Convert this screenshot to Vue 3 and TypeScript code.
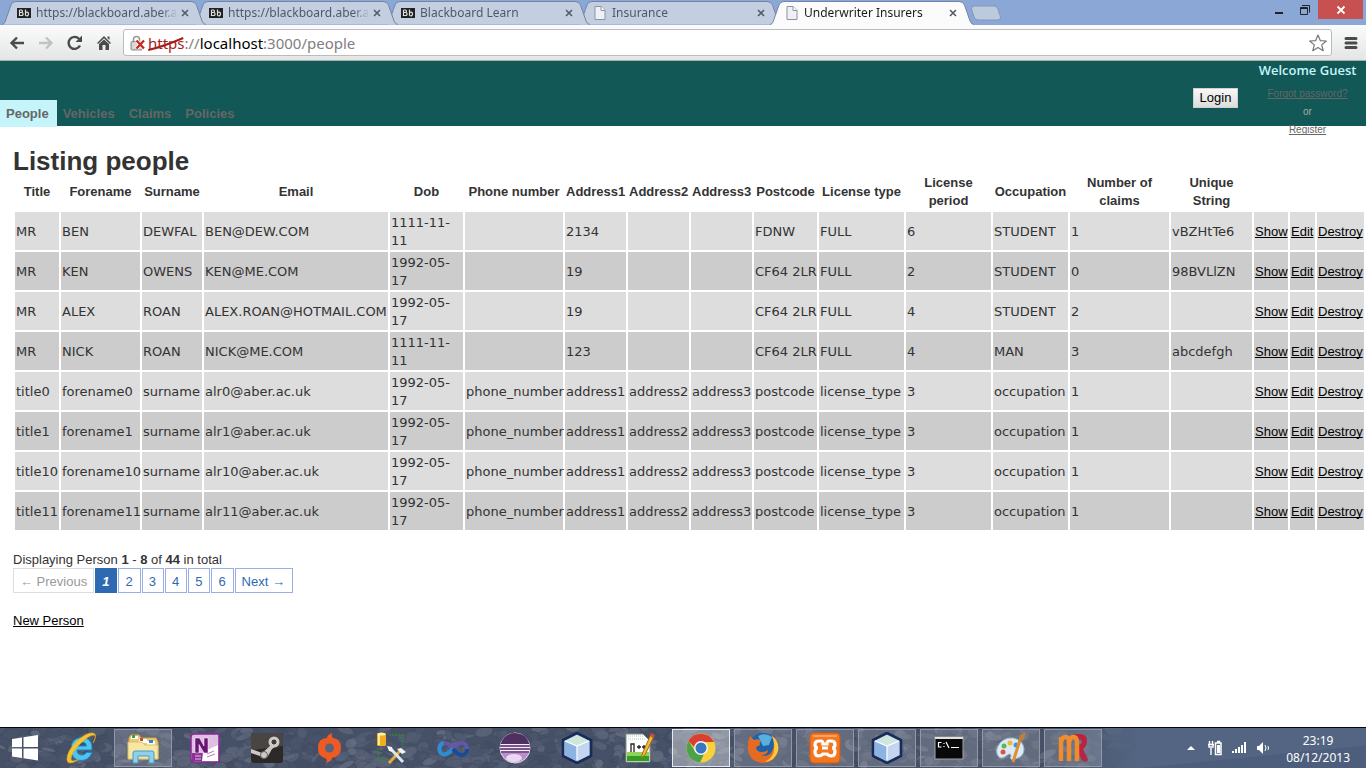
<script setup lang="ts">
import { ref } from 'vue'

interface Tab { id: number; title: string; icon: 'bb' | 'page'; active: boolean }
const tabs: Tab[] = [
  { id: 1, title: 'https://blackboard.aber.ac', icon: 'bb', active: false },
  { id: 2, title: 'https://blackboard.aber.ac', icon: 'bb', active: false },
  { id: 3, title: 'Blackboard Learn', icon: 'bb', active: false },
  { id: 4, title: 'Insurance', icon: 'page', active: false },
  { id: 5, title: 'Underwriter Insurers', icon: 'page', active: true },
]

const nav = ['People', 'Vehicles', 'Claims', 'Policies']
const current = ref('People')

const headings = [
  'Title', 'Forename', 'Surname', 'Email', 'Dob', 'Phone number', 'Address1', 'Address2', 'Address3',
  'Postcode', 'License type', 'License period', 'Occupation', 'Number of claims', 'Unique String', '', '', '',
]
const widths = [44, 79, 60, 184, 73, 98, 61, 61, 61, 63, 85, 85, 75, 99, 81, 34, 25, 47]

const named: string[][] = [
  ['MR', 'BEN', 'DEWFAL', 'BEN@DEW.COM', '1111-11-11', '', '2134', '', '', 'FDNW', 'FULL', '6', 'STUDENT', '1', 'vBZHtTe6'],
  ['MR', 'KEN', 'OWENS', 'KEN@ME.COM', '1992-05-17', '', '19', '', '', 'CF64 2LR', 'FULL', '2', 'STUDENT', '0', '98BVLlZN'],
  ['MR', 'ALEX', 'ROAN', 'ALEX.ROAN@HOTMAIL.COM', '1992-05-17', '', '19', '', '', 'CF64 2LR', 'FULL', '4', 'STUDENT', '2', ''],
  ['MR', 'NICK', 'ROAN', 'NICK@ME.COM', '1111-11-11', '', '123', '', '', 'CF64 2LR', 'FULL', '4', 'MAN', '3', 'abcdefgh'],
]
const seeded: string[][] = [0, 1, 10, 11].map((n) => [
  `title${n}`, `forename${n}`, 'surname', `alr${n}@aber.ac.uk`, '1992-05-17', 'phone_number',
  'address1', 'address2', 'address3', 'postcode', 'license_type', '3', 'occupation', '1', '',
])
const people = [...named, ...seeded]
const pages = [2, 3, 4, 5, 6]

interface App { id: string; label: string; icon: string; state: '' | 'open' | 'focus' }
const apps: App[] = [
  { id: 'ie', label: 'Internet Explorer', icon: 'ie', state: '' },
  { id: 'files', label: 'File Explorer', icon: 'files', state: 'open' },
  { id: 'onenote', label: 'OneNote', icon: 'onenote', state: '' },
  { id: 'steam', label: 'Steam', icon: 'steam', state: '' },
  { id: 'origin', label: 'Origin', icon: 'origin', state: '' },
  { id: 'db', label: 'Database tools', icon: 'db', state: '' },
  { id: 'vs', label: 'Visual Studio', icon: 'vs', state: '' },
  { id: 'eclipse', label: 'Eclipse', icon: 'eclipse', state: '' },
  { id: 'nb', label: 'NetBeans', icon: 'cube', state: '' },
  { id: 'npp', label: 'Notepad++', icon: 'npp', state: '' },
  { id: 'chrome', label: 'Chrome', icon: 'chrome', state: 'focus' },
  { id: 'firefox', label: 'Firefox', icon: 'firefox', state: 'open' },
  { id: 'xampp', label: 'XAMPP', icon: 'xampp', state: 'open' },
  { id: 'nb2', label: 'NetBeans window', icon: 'cube', state: 'open' },
  { id: 'cmd', label: 'Command Prompt', icon: 'cmd', state: 'open' },
  { id: 'paint', label: 'Paint', icon: 'paint', state: 'open' },
  { id: 'rubymine', label: 'RubyMine', icon: 'ruby', state: 'open' },
]

// Pebbles of the wallpaper that shows through the taskbar
interface Stone { x: number; y: number; rx: number; ry: number; r: number; fill: string }
let seed = 11
const rand = (): number => {
  seed = (seed * 16807) % 2147483647
  return seed / 2147483647
}
const shades = ['#4b556b', '#535e75', '#5c657a', '#646c80', '#48526a', '#535c70', '#596176', '#434d63']
const stones: Stone[] = Array.from({ length: 700 }, () => ({
  x: Math.round(rand() * 1130),
  y: Math.round(rand() * 42),
  rx: 4 + Math.round(rand() * 6),
  ry: 2 + Math.round(rand() * 4),
  r: Math.round(rand() * 60 - 30),
  fill: shades[Math.floor(rand() * shades.length)],
}))
</script>

<template>
  <div class="desktop">
    <header class="frame">
      <div class="tabs">
        <div v-for="t in tabs" :key="t.id" class="tab" :class="{ active: t.active }">
          <svg class="shape" viewBox="0 0 204 29" aria-hidden="true">
            <path v-if="t.active" d="M0 25.5Q2 25 3 22L9 5Q10 1.500 14 1.500H189Q193 1.500 194.500 5L200 21Q201.500 24.500 204 24.500V29H0Z" fill="#fbfbfb" />
            <path v-else d="M0 24.500Q2 24 3 22L9 5Q10 1.500 14 1.500H189Q193 1.500 194.500 5L200 21Q201.500 24.500 204 24.500Z" fill="#c3cfe0" />
            <path d="M0 24.500Q2 24 3 22L9 5Q10 1.500 14 1.500H189Q193 1.500 194.500 5L200 21Q201.500 24.500 204 24.500" fill="none" stroke="#7484a8" />
          </svg>
          <svg v-if="t.icon === 'bb'" class="fav" viewBox="0 0 14 14" aria-hidden="true">
            <rect y="2" width="14" height="10" fill="#222" />
            <path d="M2.500 4V10M2.500 4H4.500Q6 4.500 5 6.500H3M5 6.500Q7 7.500 5.500 9.500H2.500M8.500 3.500V9.500M8.500 6.500Q11.500 5.500 11.500 8Q11.500 10.500 8.500 9.500" fill="none" stroke="#e0e0e0" stroke-width="1.200" />
          </svg>
          <svg v-else class="fav" viewBox="0 0 14 14" aria-hidden="true">
            <path d="M2 .500H8L12 4.500V13.500H2Z" fill="#eef2f8" stroke="#8e939b" />
            <path d="M8 .500V4.500H12" fill="#fff" stroke="#8e939b" />
          </svg>
          <span class="title">{{ t.title }}</span>
          <button class="shut" type="button" aria-label="Close tab">
            <svg viewBox="0 0 8 8"><path d="M1 1L7 7M7 1L1 7" stroke="#535a66" stroke-width="1.600" /></svg>
          </button>
        </div>
        <button class="plus" type="button" aria-label="New tab">
          <svg viewBox="0 0 32 16"><path d="M4 1H24Q27 1 28 4L30.500 12Q31 15 28 15H8Q5 15 4 12L1.500 4Q1 1 4 1Z" fill="#bccadd" stroke="#8596ba" /></svg>
        </button>
      </div>
      <div class="controls">
        <button type="button" aria-label="Minimise"><svg viewBox="0 0 12 12"><path d="M2 9H10" stroke="#222" stroke-width="2" /></svg></button>
        <button type="button" aria-label="Restore"><svg viewBox="0 0 12 12" fill="none" stroke="#222"><path d="M3 1.500H10.500V8.500" /><path d="M1.500 3.500H8.500V10.500H1.500ZM1.500 4.500H8.500" /></svg></button>
        <button type="button" class="close" aria-label="Close"><svg viewBox="0 0 12 12"><path d="M2.500 2.500L9.500 9.500M9.500 2.500L2.500 9.500" stroke="#fff" stroke-width="1.800" /></svg></button>
      </div>
    </header>

    <div class="toolbar">
      <button class="tool" type="button" aria-label="Back"><svg viewBox="0 0 16 16"><path d="M15 8H3M8 2.500L2.500 8L8 13.500" fill="none" stroke="#4b4b4b" stroke-width="2.400" /></svg></button>
      <button class="tool" type="button" aria-label="Forward"><svg viewBox="0 0 16 16"><path d="M1 8H13M8 2.500L13.500 8L8 13.500" fill="none" stroke="#c2c2c2" stroke-width="2.400" /></svg></button>
      <button class="tool" type="button" aria-label="Reload"><svg viewBox="0 0 16 16"><path d="M13 10.500A6 6 0 1 1 12 3.800" fill="none" stroke="#4b4b4b" stroke-width="2.400" /><path d="M15 .500V7H8.500Z" fill="#4b4b4b" /></svg></button>
      <button class="tool" type="button" aria-label="Home"><svg viewBox="0 0 16 16"><path d="M8 1L15 8L14 9L8 3.300L2 9L1 8ZM11.500 1.500H13.500V5L11.500 3ZM3 9L8 4.500L13 9V15H9.500V10H6.500V15H3Z" fill="#4b4b4b" /></svg></button>
      <div class="omnibox">
        <svg class="lock" viewBox="0 0 16 16" aria-hidden="true">
          <path d="M3.500 7V4.500Q3.500 1.500 6.500 1.500T9.500 4.500V7" fill="none" stroke="#999" stroke-width="1.600" />
          <rect x="1" y="6.500" width="11" height="8.500" rx="1" fill="#c9c9c9" stroke="#8d8d8d" />
          <path d="M2 9H11M2 11H11M2 13H11" stroke="#e6e6e6" />
          <path d="M6.500 5.500L14 13.500M14 5.500L6.500 13.500" stroke="#fff" stroke-width="4" />
          <path d="M6.500 5.500L14 13.500M14 5.500L6.500 13.500" stroke="#c3271b" stroke-width="2.200" />
        </svg>
        <div class="url"><span class="scheme">https<svg viewBox="0 0 36 14" aria-hidden="true"><path d="M0 13Q14 10 35 1" fill="none" stroke="#a51c1c" stroke-width="2" /></svg></span><span class="dim">://</span>localhost<span class="dim">:3000/people</span></div>
        <button class="star" type="button" aria-label="Bookmark"><svg viewBox="0 0 18 18"><path d="M9 1L11.300 6.600L17.300 7L12.700 10.900L14.200 16.700L9 13.500L3.800 16.700L5.300 10.900L.700 7L6.700 6.600Z" fill="#fff" stroke="#767676" stroke-width="1.200" stroke-linejoin="round" /></svg></button>
      </div>
      <button class="menu" type="button" aria-label="Menu"><svg viewBox="0 0 14 14"><path d="M2 2.500H12M2 7H12M2 11.500H12" stroke="#4b4b4b" stroke-width="3" stroke-linecap="round" /></svg></button>
    </div>

    <div class="banner">
      <nav>
        <a v-for="n in nav" :key="n" href="#" :class="{ current: n === current }" @click.prevent="current = n">{{ n }}</a>
      </nav>
      <button class="login" type="button">Login</button>
      <div class="account">
        <strong>Welcome Guest</strong>
        <div class="links">
          <a href="#">Forgot password?</a>
          <span>or</span>
          <a href="#">Register</a>
        </div>
      </div>
    </div>

    <main>
      <h1>Listing people</h1>
      <table>
        <colgroup><col v-for="(w, i) in widths" :key="i" :style="{ width: w + 'px' }" /></colgroup>
        <thead>
          <tr><th v-for="(h, i) in headings" :key="i" scope="col">{{ h }}</th></tr>
        </thead>
        <tbody>
          <tr v-for="(p, r) in people" :key="r">
            <td v-for="(v, c) in p" :key="c" :class="{ dob: c === 4 }">{{ v }}</td>
            <td><a href="#">Show</a></td>
            <td><a href="#">Edit</a></td>
            <td><a href="#">Destroy</a></td>
          </tr>
        </tbody>
      </table>
      <p class="info">Displaying Person <b>1</b> - <b>8</b> of <b>44</b> in total</p>
      <div class="pager">
        <span class="off">← Previous</span>
        <em>1</em>
        <a v-for="p in pages" :key="p" href="#">{{ p }}</a>
        <a href="#">Next →</a>
      </div>
      <p class="new"><a href="#">New Person</a></p>
    </main>

    <footer class="taskbar">
      <svg class="wall" viewBox="0 0 1366 41" preserveAspectRatio="none" aria-hidden="true">
        <defs>
          <linearGradient id="sea" x1="0" x2="1"><stop offset="0" stop-color="#536582" stop-opacity="0" /><stop offset="1" stop-color="#536582" /></linearGradient>
        </defs>
        <rect width="1366" height="41" fill="#465067" />
        <ellipse v-for="(s, i) in stones" :key="i" :cx="s.x" :cy="s.y" :rx="s.rx" :ry="s.ry" :transform="`rotate(${s.r} ${s.x} ${s.y})`" :fill="s.fill" fill-opacity=".800" stroke="#3c465c" stroke-opacity=".500" stroke-width=".600" />
        <rect x="1050" width="90" height="41" fill="url(#sea)" />
        <rect x="1140" width="226" height="41" fill="#536582" />
        <path d="M1140 41L1366 18V41Z" fill="#4c5e7b" />
      </svg>
      <button class="start" type="button" aria-label="Start">
        <svg viewBox="0 0 28 26"><path d="M1 4L11 2.500V12H1ZM12.500 2.300L27 0V12H12.500ZM1 13.500H11V23L1 21.600ZM12.500 13.500H27V25.500L12.500 23.300Z" fill="#fff" /></svg>
      </button>
      <button v-for="a in apps" :key="a.id" class="app" :class="a.state" type="button" :aria-label="a.label">
        <svg v-if="a.icon === 'ie'" viewBox="0 0 32 32">
          <path d="M27 18H12Q12 23 17 23Q20 23 21.500 20.500H27Q24 28.500 16 28.500Q6 28 6 17Q6 6 17 5.500Q28 6 27 18ZM12 14H21.500Q21 10 17 10Q12.500 10 12 14Z" fill="#4fc4f2" stroke="#1a86c4" />
          <path d="M6.500 24Q2 31 5 31Q9 31 14 27Q6 31 6 27Q6 21 15 12Q24 3 29 3Q32 4 28 11Q33 2 28 1Q22 0 12 9Q2 19 2 27Q2 31 5 31" fill="#f5c52f" stroke="#e0a921" stroke-width=".600" />
        </svg>
        <svg v-else-if="a.icon === 'files'" viewBox="0 0 32 32">
          <path d="M2 6L4 3H12L14 6H29L31 10V27H2Z" fill="#eacb6d" stroke="#cda646" />
          <path d="M4 4H11V7H4Z" fill="#fff" /><path d="M5 3H8V6H5Z" fill="#31a54f" />
          <path d="M12 7H20V11H12Z" fill="#fff" /><path d="M13 6H16V9H13Z" fill="#cf4b32" />
          <path d="M20 9H28V13H20Z" fill="#fff" /><path d="M22 8H26V11H22Z" fill="#3a80d0" />
          <path d="M1 10H15L18 13H31V27H1Z" fill="#f7e7a5" stroke="#ddbf68" />
          <path d="M6 31V21Q6 19 8 19H25Q27 19 27 21V31H22V24H11V31Z" fill="#8fd0ee" stroke="#4a9bc5" />
        </svg>
        <svg v-else-if="a.icon === 'onenote'" viewBox="0 0 32 32">
          <path d="M5 2H30V30H5Q2 30 2 27V5Q2 2 5 2Z" fill="#dfbfe3" stroke="#8a2a91" stroke-width="1.500" />
          <path d="M3 21H20V29H3Z" fill="#8d3194" /><path d="M14 20L29 13V29H13Z" fill="#fff" />
          <path d="M6 21V6H10.500L15 14V6H19V21H15L10 12.500V21Z" fill="#6b1674" stroke="#fff" stroke-width=".500" />
          <path d="M6 24H12M6 27H12" stroke="#e2c3e6" /><path d="M18 22L25 19M18 25L26 22" stroke="#b67abd" />
        </svg>
        <svg v-else-if="a.icon === 'steam'" viewBox="0 0 32 32">
          <rect y="1" width="32" height="30" rx="3" fill="#2c2928" /><path d="M0 4Q0 1 3 1H29Q32 1 32 4V14L0 18Z" fill="#494542" />
          <path d="M0 17L11 21L19 14L20 10L28 12L21 17L17 24Q13 29 9 24L0 21Z" fill="#ccc8c5" />
          <circle cx="23" cy="10" r="5.500" fill="#ccc8c5" /><circle cx="23" cy="10" r="3.200" fill="#413d3b" stroke="#eee" /><circle cx="13" cy="23" r="3.500" fill="#ccc8c5" stroke="#635f5c" />
        </svg>
        <svg v-else-if="a.icon === 'origin'" viewBox="0 0 32 32">
          <path d="M19 1Q14 3 14 6Q5 6 5 16Q5 24 12 26Q15 27 13 31Q19 29 19 26Q28 24 28 16Q28 7 20 6Q18 4 19 1Z" fill="#ef5a22" /><circle cx="16.500" cy="16" r="4.500" fill="#59647a" />
        </svg>
        <svg v-else-if="a.icon === 'db'" viewBox="0 0 32 32">
          <path d="M14 3H27V14M3 16V27H13" fill="none" stroke="#32872d" stroke-width="1.600" stroke-dasharray="2 1" />
          <rect x="2" y="1" width="9" height="13" rx="1.500" fill="#f2ad20" /><path d="M4 2V13" stroke="#ffeb90" stroke-width="2" /><ellipse cx="6.500" cy="2" rx="4" ry="1.500" fill="#fff0a5" />
          <path d="M14 31L25 19" stroke="#e4ac37" stroke-width="3" /><path d="M15 16L28 30" stroke="#d9e7ef" stroke-width="3" /><path d="M12 14L17 15L18 20L14 19ZM22 17L26 16L31 20L27 22Z" fill="#f2f5f5" />
        </svg>
        <svg v-else-if="a.icon === 'vs'" viewBox="0 0 32 32">
          <path d="M16 17C12 11 9 10.500 6.500 11C3 12 2.500 14.500 2.500 17C2.500 20 4 22.500 7 22.500C14 22.500 18 11 25 11C28 11 30 13.500 30 17C30 20.500 28 23 25 23C21.500 23 19 21 16 17" fill="none" stroke="#6157ad" stroke-width="4" />
          <path d="M6.500 11C3 12 2.500 14.500 2.500 17C2.500 20 4 22.500 7 22.500C10.500 22.500 13 20 16 17" fill="none" stroke="#2b8fd0" stroke-width="4" />
          <path d="M16 17C19 21 21.500 23 25 23C28 23 30 20.500 30 17" fill="none" stroke="#174b96" stroke-width="4" />
        </svg>
        <svg v-else-if="a.icon === 'eclipse'" viewBox="0 0 32 32">
          <circle cx="16" cy="16" r="15" fill="#b98fca" stroke="#e6d6ed" /><path d="M1.500 12Q5 1 16 1T30.500 12Z" fill="#503062" /><path d="M1 14H31M1 17H31M2 20H30" stroke="#64417a" stroke-width="1.500" /><path d="M2 12.500H30M1 15.500H31M2 18.500H30" stroke="#f5edf8" /><ellipse cx="15" cy="26" rx="8" ry="4" fill="#ead7f2" />
        </svg>
        <svg v-else-if="a.icon === 'cube'" viewBox="0 0 32 32">
          <path d="M16 1L30 8V24L16 31L2 24V8Z" fill="#b7cde9" stroke="#172c58" stroke-width="2.600" /><path d="M16 3L28 9L16 14L4 9Z" fill="#d0e6dd" /><path d="M4 9L16 14V29L4 23Z" fill="#8db3e2" /><path d="M16 14L28 9V23L16 29Z" fill="#c3d5f0" /><path d="M4 9L16 14L28 9M16 14V28" fill="none" stroke="#fff" stroke-width="1.200" />
        </svg>
        <svg v-else-if="a.icon === 'npp'" viewBox="0 0 32 32">
          <path d="M3 2H20L27 9V30H3Z" fill="#fff" stroke="#83907d" /><path d="M4 20H26V29H4Z" fill="#8ed45c" /><path d="M4 24H26V29H4Z" fill="#329e1f" /><path d="M5 4H21M5 7H22" stroke="#a8c4d3" stroke-dasharray="1 1" />
          <path d="M8 20V12H11V20M14 15H18M16 13V17M19 15H23M21 13V17" fill="none" stroke="#222" stroke-width="1.300" /><path d="M18 26L20 20L28 2L31 4L22 23Z" fill="#f2bb37" stroke="#a66a17" /><path d="M27 4L28 1L32 3L30 6Z" fill="#d34937" />
        </svg>
        <svg v-else-if="a.icon === 'chrome'" viewBox="0 0 32 32">
          <circle cx="16" cy="16" r="14.500" fill="#fbd13b" /><path d="M3.400 9A14.500 14.500 0 0 1 29 10H16Q12 10 10 16Z" fill="#db3f32" /><path d="M3.400 9L10 19Q13 24 19 22L15 30.500A14.500 14.500 0 0 1 3.400 9Z" fill="#4aa34a" /><circle cx="16" cy="16" r="7" fill="#f5f5f5" /><circle cx="16" cy="16" r="5.500" fill="#3778c1" />
        </svg>
        <svg v-else-if="a.icon === 'firefox'" viewBox="0 0 32 32">
          <circle cx="16" cy="15.500" r="14.500" fill="#1f62a8" /><path d="M11 4Q18 0 25 5L22 13L16 14Z" fill="#57b1de" />
          <path d="M3 4L7 8Q12 6 14 9Q12 10 13 13L9 15Q9 20 15 20Q19 20 21 18Q21 23 14 23Q23 26 26 17Q28 11 25 4Q32 9 31 18Q29 30 16 31Q3 30 1 18Q0 10 3 4Z" fill="#e66b22" /><path d="M25 4Q33 10 31 19Q28 29 18 30Q27 25 27 17Q28 11 25 4Z" fill="#f8c83d" />
        </svg>
        <svg v-else-if="a.icon === 'xampp'" viewBox="0 0 32 32">
          <rect x="1" y="1" width="30" height="30" rx="4" fill="#f37720" stroke="#d95b0d" /><path d="M4 3H28V5H4Z" fill="#f9a261" />
          <path d="M13 16H19M12 9H10Q6 9 6 12.500Q6 16 9 16Q6 16 6 20Q6 24 10 24Q12 24 14 22L18 22Q20 24 22 24Q26 24 26 20Q26 16 23 16Q26 16 26 12.500Q26 9 22 9H20Q18 9 18 12H14Q14 9 12 9" fill="none" stroke="#fff" stroke-width="3.200" />
        </svg>
        <svg v-else-if="a.icon === 'cmd'" viewBox="0 0 32 32">
          <rect x="2" y="5" width="28" height="22" fill="#090909" stroke="#a1a4a8" /><path d="M2 6H30" stroke="#e0e0e0" stroke-width="2" /><path d="M8.500 10.500H5.500V15H8.500M11 11V12M11 14V15M13 10L16 16M18 15.500H26" fill="none" stroke="#fff" stroke-width="1.200" />
        </svg>
        <svg v-else-if="a.icon === 'paint'" viewBox="0 0 32 32">
          <path d="M3 14Q8 5 18 6Q28 8 29 17Q29 25 20 27Q14 29 16 24Q16 20 11 24Q5 29 2 22Q1 18 3 14Z" fill="#dbeaf4" stroke="#98bad1" /><circle cx="8" cy="20" r="2.500" fill="#d75443" /><circle cx="9" cy="14" r="2.500" fill="#61b74d" /><circle cx="15" cy="11" r="2.500" fill="#f1b92f" /><circle cx="21" cy="13" r="2.500" fill="#3a9ad8" /><path d="M18 30L25 8" stroke="#e18e2e" stroke-width="3" /><path d="M23 9L25 3L31 0L29 7L26 10Z" fill="#b78044" />
        </svg>
        <svg v-else viewBox="0 0 32 32">
          <path d="M17 2H23Q30 2 30 9Q30 14 26 17L31 28Q29 31 25 28L20 18V13Q25 13 25 9Q24 7 20 7Z" fill="#ba2442" /><path d="M4 29V5M4 10Q5 5 8.500 5Q12 5 12 11V29M12 11Q13 5 16.500 5Q20 5 20 11V29" fill="none" stroke="#f08c2c" stroke-width="4.500" />
        </svg>
      </button>
      <div class="tray">
        <svg viewBox="0 0 8 16" class="up"><path d="M0 10L4 6L8 10Z" fill="#fff" /></svg>
        <svg viewBox="0 0 16 16" class="glyph"><path d="M2.500 1V4M5.500 1V4M1 4.500H7M2 5V7H6V5M4 8V15" fill="none" stroke="#fff" stroke-width="1.400" /><path d="M8.500 3H14V14.500H8.500ZM10 1.500H12.500V3" fill="none" stroke="#fff" stroke-width="1.500" /><rect x="10" y="5" width="3" height="8" fill="#fff" /></svg>
        <svg viewBox="0 0 16 16" class="glyph"><path d="M1 11H3V13H1ZM4 9H6V13H4ZM7 7H9V13H7ZM10 5H12V13H10ZM13 2H15V13H13Z" fill="#fff" /></svg>
        <svg viewBox="0 0 16 16" class="glyph"><path d="M2 6H4L8 2V14L4 10H2Z" fill="#fff" /><path d="M10 5Q12 8 10 11M13 6Q14 8 13 10" fill="none" stroke="#fff" /></svg>
        <div class="clock"><time>23:19</time><time>08/12/2013</time></div>
      </div>
    </footer>
  </div>
</template>

<style>
body { background: #fff; }
#app { min-height: 100vh; display: flex; flex-direction: column; }
</style>

<style scoped>
.desktop { flex: 1; display: flex; flex-direction: column; font: 13px/18px "Liberation Sans", Arial, sans-serif; color: #333; background: #fff; }
button { border: 0; background: none; padding: 0; margin: 0; font: inherit; color: inherit; }
svg { display: block; }
a { color: #000; text-decoration-skip-ink: none; }

.frame { height: 25px; background: #8ba7d6; display: flex; justify-content: space-between; }
.tabs { display: flex; padding-left: 2px; font: 12px/16px "Noto Sans", "Open Sans", sans-serif; color: #4f5868; }
.tab { position: relative; isolation: isolate; width: 204px; height: 25px; margin-right: -12px; box-sizing: border-box; padding: 1px 17px 0 15px; display: flex; align-items: center; }
.tab:nth-child(1) { z-index: 4; }
.tab:nth-child(2) { z-index: 3; }
.tab:nth-child(3) { z-index: 2; }
.tab:nth-child(4) { z-index: 1; }
.tab.active { z-index: 6; color: #1b1b1b; }
.shape { position: absolute; left: 0; top: 0; width: 204px; height: 29px; z-index: -1; }
.fav { flex: none; width: 14px; height: 14px; margin-right: 5px; }
.title { flex: 1; min-width: 0; overflow: hidden; white-space: nowrap; margin-right: 3px; mask-image: linear-gradient(90deg, #000 88%, transparent); }
.shut { width: 8px; height: 8px; }
.plus { align-self: center; width: 32px; height: 16px; margin-left: 8px; }
.controls { display: flex; align-items: flex-start; padding-right: 3px; }
.controls button { width: 26px; height: 19px; display: flex; align-items: center; justify-content: center; }
.controls .close { width: 45px; background: #c75050; }
.controls svg { width: 12px; height: 12px; }

.toolbar { height: 35px; border-bottom: 1px solid #a9afae; background: linear-gradient(#fbfbfb, #e4e6e6); display: flex; align-items: center; padding: 0 8px 0 7px; gap: 6px; }
.tool { width: 20px; height: 20px; margin-right: 3px; }
.tool svg { width: 16px; height: 16px; margin: 2px; }
.omnibox { flex: 1; height: 25px; border: 1px solid #bcbcbc; border-radius: 3px; background: #fff; display: flex; align-items: center; padding: 0 4px 0 6px; }
.lock { width: 16px; height: 16px; margin-right: 2px; }
.url { flex: 1; font: 15px/20px "Noto Sans", "Open Sans", sans-serif; color: #000; }
.scheme { position: relative; color: #a51c1c; }
.scheme svg { position: absolute; left: 0; top: 4px; width: 100%; height: 14px; }
.dim { color: #808080; }
.star, .star svg { width: 18px; height: 18px; }
.menu { width: 14px; height: 14px; margin-left: 6px; }

.banner { height: 65px; background: #115856; display: flex; align-items: flex-start; }
nav { display: flex; flex: 1; margin-top: 39px; }
nav a { padding: 4px 8px 4px 6px; line-height: 19px; font-size: 13px; font-weight: bold; color: #666; text-decoration: none; }
nav .current { background: #c5f4fb; }
.login { margin: 27px 20px 0 0; width: 45px; height: 20px; border: 1px solid #d0d0d0; background: linear-gradient(#f8f8f8, #ddd); color: #000; font-size: 13px; line-height: 18px; }
.account { width: 99px; padding-right: 9px; text-align: center; }
.account strong { display: block; height: 24px; font: 600 13px/18px "Open Sans", "Noto Sans", sans-serif; color: #c5f4fb; white-space: nowrap; }
.links { display: flex; flex-direction: column; font-size: 10px; color: #aaa; }
.links a { color: #666; }

main { flex: 1; padding: 26px 0 0 13px; }
h1 { margin: 0; font-size: 26px; line-height: 18px; font-weight: bold; }
table { width: 100%; table-layout: fixed; border-collapse: separate; border-spacing: 2px; font: 13px/18px "DejaVu Sans", Verdana, sans-serif; }
th, td { padding: 2px 1px 0; height: 36px; white-space: nowrap; }
th { font: bold 13px/18px "Liberation Sans", Arial, sans-serif; white-space: normal; text-align: center; }
td.dob { white-space: normal; }
tbody tr:nth-child(odd) td { background: #ddd; }
tbody tr:nth-child(even) td { background: #ccc; }
td a { font-family: "Liberation Sans", Arial, sans-serif; }
p { margin: 0; }
.info { margin-top: 19px; line-height: 17px; }
.pager { display: flex; gap: 1px; }
.pager > * { height: 23px; line-height: 25px; padding: 0 7px 0 6px; border: 1px solid #9aafe5; color: #2e6ab1; text-decoration: none; font-style: normal; }
.pager .off { padding: 0 6px; border-color: #ddd; color: #999; }
.pager em { background: #2e6ab1; border-color: #2e6ab1; color: #fff; font-weight: bold; font-style: italic; }
.new { margin-top: 19px; }

.taskbar { position: relative; isolation: isolate; height: 41px; box-sizing: border-box; border-top: 1px solid #05070c; display: flex; align-items: center; }
.wall { position: absolute; inset: 0; width: 100%; height: 100%; z-index: -1; }
.start { width: 50px; height: 40px; }
.start svg { width: 28px; height: 26px; margin: 0 auto; }
.app { width: 58px; height: 38px; margin: 0 2px; box-sizing: border-box; border: 1px solid transparent; flex: none; }
.app svg { width: 32px; height: 32px; margin: 0 auto; }
.app.open { border-color: #8f98a8; background: rgba(255, 255, 255, 0.16); }
.app.focus { border-color: #e6e9ee; background: rgba(255, 255, 255, 0.38); }
.tray { margin-left: auto; display: flex; align-items: center; gap: 8px; padding-right: 16px; }
.up { width: 8px; height: 16px; margin-right: 4px; }
.glyph { width: 16px; height: 16px; }
.clock { display: flex; flex-direction: column; align-items: center; margin-left: 7px; padding-top: 2px; font: 12px/17px "Noto Sans", "Open Sans", sans-serif; color: #fff; }
</style>
